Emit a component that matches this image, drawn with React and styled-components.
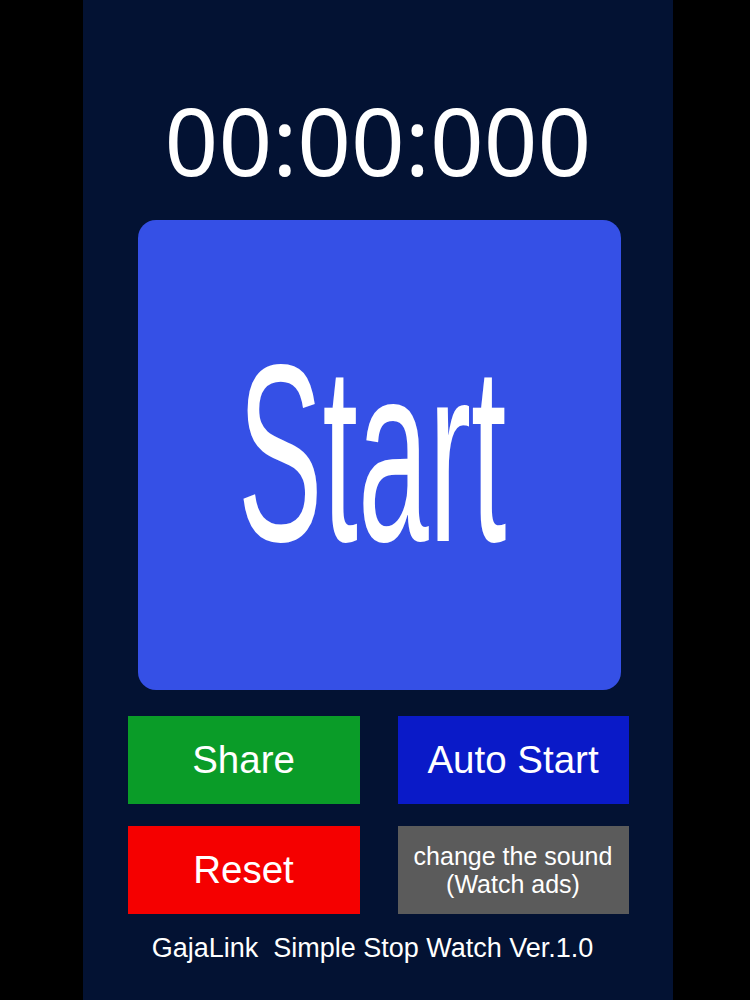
import React from "react";
import styled, { createGlobalStyle } from "styled-components";

const Global = createGlobalStyle`
  html, body { margin: 0; padding: 0; background: #000; }
  body { font-family: "Liberation Sans", Arial, sans-serif; }
`;

const Screen = styled.div`
  width: 750px;
  height: 1000px;
  background: #000;
  display: flex;
  overflow: hidden;
`;

const Panel = styled.main`
  margin-left: 83px;
  width: 590px;
  height: 1000px;
  background: #031233;
  display: flex;
  flex-direction: column;
  align-items: center;
  box-sizing: border-box;
  padding-top: 93px;
`;

const Timer = styled.div`
  font-family: "Noto Sans", "Open Sans", sans-serif;
  font-size: 94px;
  line-height: 95px;
  height: 95px;
  color: #fff;
  margin-left: 0px;
`;

const StartButton = styled.button`
  margin-top: 32px;
  width: 483px;
  height: 470px;
  margin-left: 3px;
  border: none;
  border-radius: 18px;
  background: #3550e6;
  display: flex;
  align-items: center;
  justify-content: center;
  overflow: hidden;
  padding: 0;
  cursor: pointer;
`;

const StartLabel = styled.span`
  display: inline-block;
  font-family: "Liberation Sans", Arial, sans-serif;
  font-size: 252px;
  line-height: 1;
  color: #fff;
  transform: translate(-7px, -1px) scaleX(0.505);
  white-space: nowrap;
`;

const Grid = styled.div`
  margin-top: 26px;
  display: grid;
  grid-template-columns: 232px 231px;
  grid-auto-rows: 88px;
  column-gap: 38px;
  row-gap: 22px;
`;

const ActionButton = styled.button`
  border: none;
  padding: 0;
  margin: 0;
  background: ${(p) => p.$bg};
  color: #fff;
  font-family: "Liberation Sans", Arial, sans-serif;
  font-size: ${(p) => (p.$small ? "25px" : "38.5px")};
  line-height: ${(p) => (p.$small ? "28px" : "1")};
  display: flex;
  align-items: center;
  justify-content: center;
  text-align: center;
  cursor: pointer;
`;

const Footer = styled.div`
  margin-top: 19px;
  font-size: 27px;
  line-height: 30px;
  color: #fff;
  white-space: pre;
  margin-right: 11px;
`;

export default function App() {
  return (
    <>
      <Global />
      <Screen>
        <Panel>
          <Timer>00:00:000</Timer>
          <StartButton>
            <StartLabel>Start</StartLabel>
          </StartButton>
          <Grid>
            <ActionButton $bg="#0a9c28">Share</ActionButton>
            <ActionButton $bg="#0a1ac8">Auto Start</ActionButton>
            <ActionButton $bg="#f50000">Reset</ActionButton>
            <ActionButton $bg="#5b5b5b" $small>
              change the sound
              <br />
              (Watch ads)
            </ActionButton>
          </Grid>
          <Footer>{"GajaLink  Simple Stop Watch Ver.1.0"}</Footer>
        </Panel>
      </Screen>
    </>
  );
}
